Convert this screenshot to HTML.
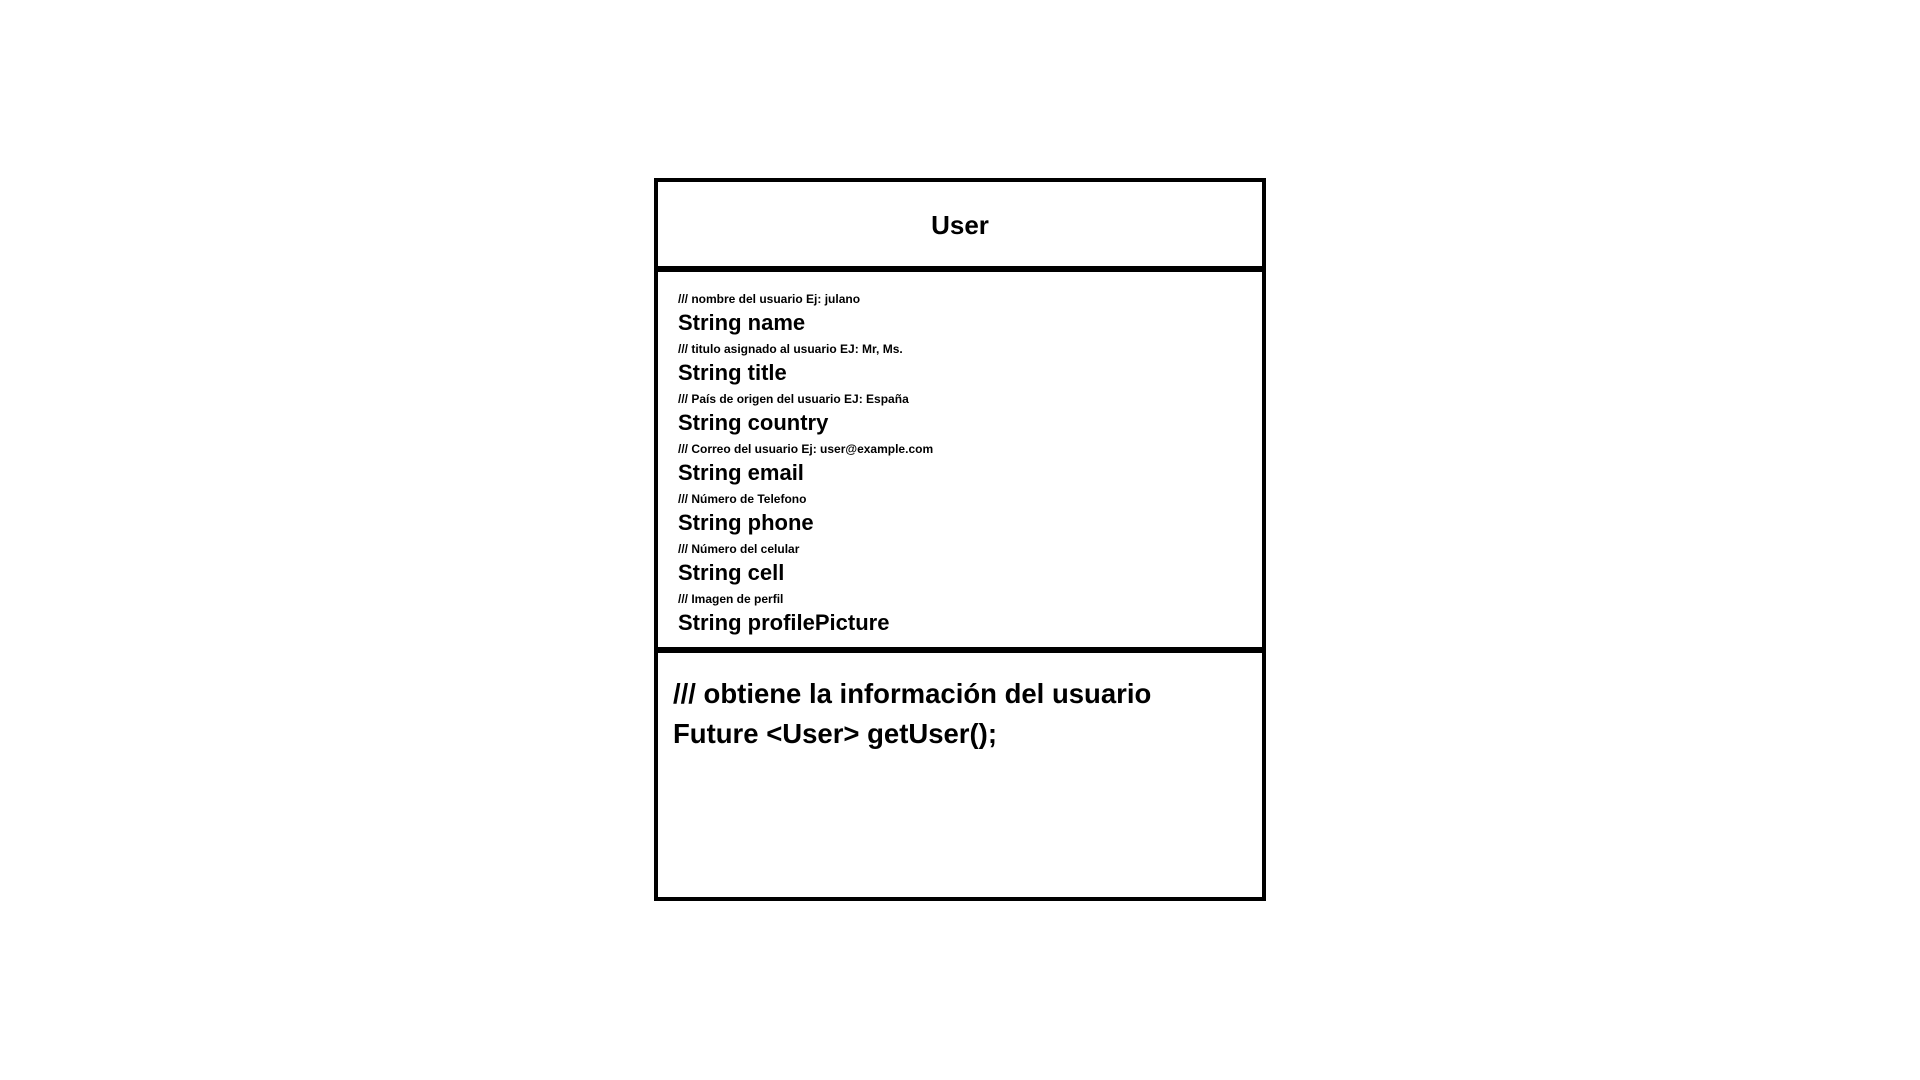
<!DOCTYPE html>
<html><head><meta charset="utf-8"><style>
html,body{margin:0;padding:0;background:#fff;}
body{width:1920px;height:1080px;position:relative;font-family:"Liberation Sans",sans-serif;color:#000;font-weight:bold;}
.b{position:absolute;background:#000;}
.t{position:absolute;white-space:nowrap;}
.c{font-size:12px;}
.f{font-size:22px;}
</style></head><body>
<div class="b" style="left:654px;top:178px;width:612px;height:4px"></div>
<div class="b" style="left:654px;top:897px;width:612px;height:4px"></div>
<div class="b" style="left:654px;top:178px;width:4px;height:723px"></div>
<div class="b" style="left:1262px;top:178px;width:4px;height:723px"></div>
<div class="b" style="left:654px;top:266px;width:612px;height:6px"></div>
<div class="b" style="left:654px;top:647px;width:612px;height:6px"></div>

<div class="t" style="left:654px;width:612px;text-align:center;top:210px;font-size:26px;">User</div>

<div class="t c" style="left:678px;top:292px">/// nombre del usuario Ej: julano</div>
<div class="t f" style="left:678px;top:310px">String name</div>
<div class="t c" style="left:678px;top:342px">/// titulo asignado al usuario EJ: Mr, Ms.</div>
<div class="t f" style="left:678px;top:360px">String title</div>
<div class="t c" style="left:678px;top:392px">/// País de origen del usuario EJ: España</div>
<div class="t f" style="left:678px;top:410px">String country</div>
<div class="t c" style="left:678px;top:442px">/// Correo del usuario Ej: user@example.com</div>
<div class="t f" style="left:678px;top:460px">String email</div>
<div class="t c" style="left:678px;top:492px">/// Número de Telefono</div>
<div class="t f" style="left:678px;top:510px">String phone</div>
<div class="t c" style="left:678px;top:542px">/// Número del celular</div>
<div class="t f" style="left:678px;top:560px">String cell</div>
<div class="t c" style="left:678px;top:592px">/// Imagen de perfil</div>
<div class="t f" style="left:678px;top:610px">String profilePicture</div>

<div class="t" style="left:673px;top:678px;font-size:27.5px">/// obtiene la información del usuario</div>
<div class="t" style="left:673px;top:718px;font-size:27.5px">Future &lt;User&gt; getUser();</div>
</body></html>
